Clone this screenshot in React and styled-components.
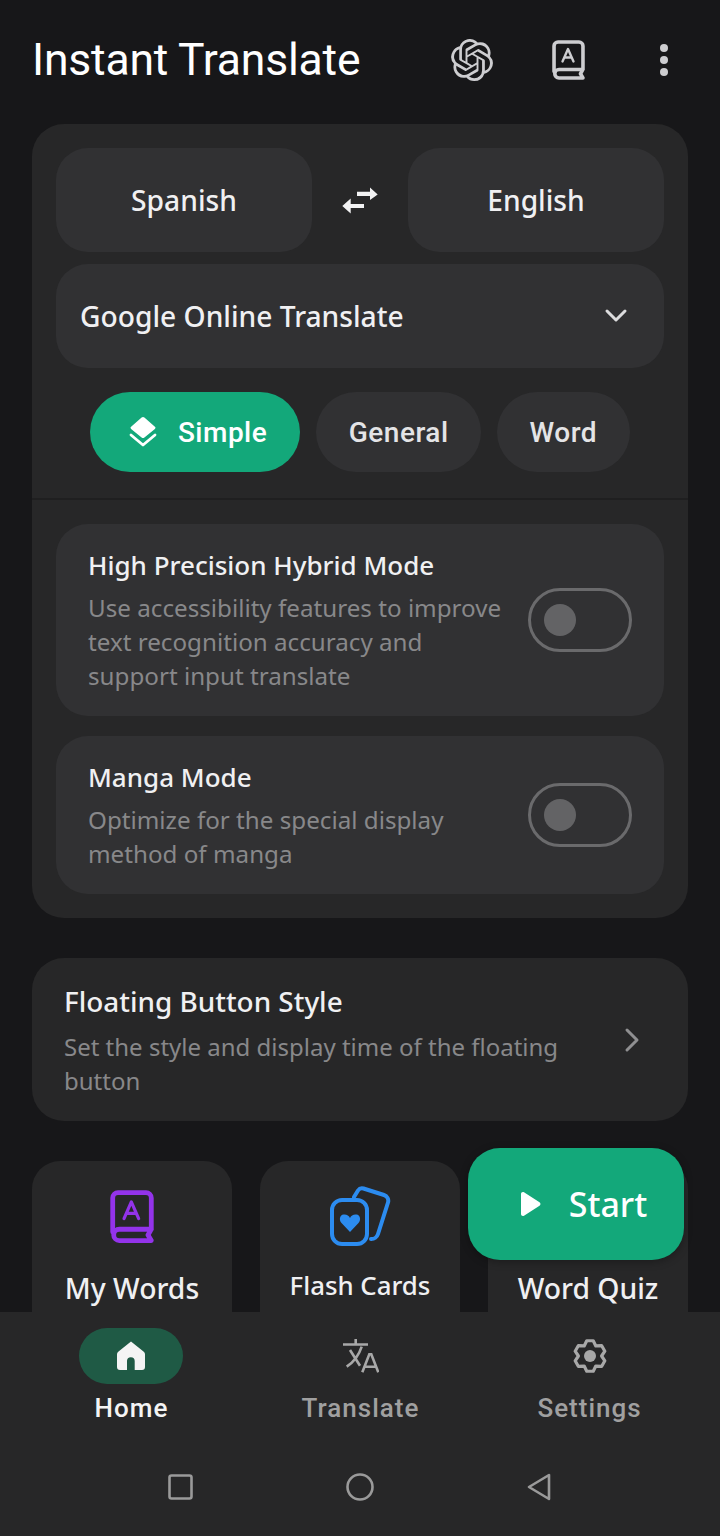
import React from 'react';
import styled, { createGlobalStyle } from 'styled-components';
import { SiOpenai } from 'react-icons/si';

const GlobalStyle = createGlobalStyle`
  html, body {
    margin: 0;
    padding: 0;
    background: #171719;
  }
  * {
    box-sizing: border-box;
  }
`;

// six lobed gear outline, top lobe first
const gearPath = () => {
  const point = (deg, r) => {
    const a = (deg * Math.PI) / 180;
    return `${(19 + r * Math.cos(a)).toFixed(2)} ${(18 + r * Math.sin(a)).toFixed(2)}`;
  };
  const parts = [];
  for (let k = 0; k < 6; k++) {
    const a = -90 + 60 * k;
    parts.push(point(a - 30, 11.6), point(a - 12, 15.6), point(a + 12, 15.6));
  }
  return `M${parts.join('L')}Z`;
};

function BookIcon({ size = 33, color = '#cdcdd0' }) {
  return (
    <svg width={size} height={size * 1.21} viewBox="0 0 33 40" fill="none" stroke={color} strokeWidth="3.600" strokeLinejoin="round" strokeLinecap="round">
      <path d="M2 31.500V6a4 4 0 0 1 4-4h21a4 4 0 0 1 4 4v23.500H7a4.250 4.250 0 0 0 0 8.500h24l-2.500-4.200 2.500-4.300" />
      <path d="M10.500 21.500l5.500-12.500 5.500 12.500M12.500 17.500h7" strokeWidth="2.400" />
    </svg>
  );
}

function CardsIcon() {
  return (
    <svg width="62" height="62" viewBox="0 0 62 62" fill="none" stroke="#2c8cf0" strokeWidth="4" strokeLinejoin="round">
      <path d="M25 11l4-6.500a5 5 0 0 1 5.500-2L55 9a6 6 0 0 1 4 7.500L49 48a7 7 0 0 1-7 5" strokeLinecap="round" />
      <rect x="3" y="14" width="35" height="44" rx="10" />
      <path d="M21 46l-8.500-9c-3-3.500-1.500-8 2-8.500 3-.4 5.500 1 6.500 3.500 1-2.500 3.500-3.900 6.500-3.500 3.500.5 5 5 2 8.500z" fill="#2c8cf0" stroke="none" />
    </svg>
  );
}

function QuizIcon() {
  return (
    <svg width="40" height="40" viewBox="0 0 40 40" fill="none" stroke="#19a97b" strokeWidth="4">
      <circle cx="20" cy="20" r="16" />
    </svg>
  );
}

function LayersIcon() {
  return (
    <svg width="30" height="32" viewBox="0 0 30 32" fill="#fff">
      <path d="M15 1a2 2 0 0 1 1.400.6l10.500 9.200a1.400 1.400 0 0 1 0 2.200l-10.500 8.400a2 2 0 0 1-2.800 0L3.100 13a1.400 1.400 0 0 1 0-2.200L13.600 1.600A2 2 0 0 1 15 1z" />
      <path d="M3 19l12 10 12-10" fill="none" stroke="#fff" strokeWidth="2.800" strokeLinecap="round" strokeLinejoin="round" />
    </svg>
  );
}

function SwapIcon() {
  return (
    <svg width="36" height="27" viewBox="0 0 36 27" fill="#f2f2f3">
      <path d="M15 4.700h13V.5l7.700 7-7.700 5.500V9H15z" />
      <path d="M22 17H8.700v-5.500L.3 19l8.400 7.500V21H22z" />
    </svg>
  );
}

function HomeIcon() {
  return (
    <svg width="28" height="30" viewBox="0 0 28 30" fill="#f4f4f4">
      <path d="M14 .5L26.500 10.500c1 .8 1.500 1.800 1.500 3V26a3 3 0 0 1-3 3h-7.300V20a3.850 3.850 0 0 0-7.700 0v9H3a3 3 0 0 1-3-3V13.500c0-1.200.5-2.200 1.500-3z" />
    </svg>
  );
}

function TranslateIcon() {
  return (
    <svg width="38" height="36" viewBox="-2 0 38 36" fill="none" stroke="#a8a8a8" strokeWidth="2.600">
      <path d="M0 6.500h25M12.700 1v5.500M7 12l10 15.700M18.700 8.700C16 17 11 24 3.700 28.700M19.300 34.300l7-18h2l7 18M22 28.700h11" />
    </svg>
  );
}

function GearIcon() {
  return (
    <svg width="36" height="36" viewBox="0 0 36 36" fill="none" stroke="#a8a8a8" strokeWidth="3.200" strokeLinejoin="round">
      <path d={gearPath()} />
      <circle cx="19" cy="18" r="6" fill="#a8a8a8" stroke="none" />
    </svg>
  );
}

function App() {
  return (
    <Screen>
      <GlobalStyle />
      <Content>
        <Header>
          <AppTitle>Instant Translate</AppTitle>
          <HeaderIcons>
            <HeaderIcon>
              <SiOpenai size={42} color="#cdcdd0" />
            </HeaderIcon>
            <HeaderIcon>
              <BookIcon />
            </HeaderIcon>
            <HeaderIcon>
              <MoreDots>
                <span />
                <span />
                <span />
              </MoreDots>
            </HeaderIcon>
          </HeaderIcons>
        </Header>

        <MainCard>
          <TopPart>
            <LangRow>
              <LangButton>Spanish</LangButton>
              <SwapIcon />
              <LangButton>English</LangButton>
            </LangRow>
            <EngineSelect>
              Google Online Translate
              <svg width="24" height="16" viewBox="0 0 24 16" fill="none" stroke="#dcdcde" strokeWidth="3" strokeLinecap="round" strokeLinejoin="round">
                <path d="M3 3l9 9 9-9" />
              </svg>
            </EngineSelect>
            <ChipRow>
              <Chip $active>
                <LayersIcon />
                Simple
              </Chip>
              <Chip>General</Chip>
              <Chip>Word</Chip>
            </ChipRow>
          </TopPart>
          <Options>
            <OptionCard>
              <OptionText>
                <OptionTitle>High Precision Hybrid Mode</OptionTitle>
                <OptionDesc>
                  Use accessibility features to improve
                  <br />
                  text recognition accuracy and
                  <br />
                  support input translate
                </OptionDesc>
              </OptionText>
              <Toggle />
            </OptionCard>
            <OptionCard>
              <OptionText>
                <OptionTitle>Manga Mode</OptionTitle>
                <OptionDesc>
                  Optimize for the special display
                  <br />
                  method of manga
                </OptionDesc>
              </OptionText>
              <Toggle />
            </OptionCard>
          </Options>
        </MainCard>

        <FloatCard>
          <FloatText>
            <FloatTitle>Floating Button Style</FloatTitle>
            <FloatDesc>
              Set the style and display time of the floating
              <br />
              button
            </FloatDesc>
          </FloatText>
          <Chevron width="16" height="26" viewBox="0 0 16 26" fill="none" stroke="#8f8f91" strokeWidth="3" strokeLinecap="round" strokeLinejoin="round">
            <path d="M3 3l10 10-10 10" />
          </Chevron>
        </FloatCard>

        <ToolRow>
          <ToolCard>
            <ToolIcon>
              <BookIcon size={44} color="#9333ea" />
            </ToolIcon>
            <ToolLabel>My Words</ToolLabel>
          </ToolCard>
          <ToolCard>
            <ToolIcon>
              <CardsIcon />
            </ToolIcon>
            <ToolLabel $small>Flash Cards</ToolLabel>
          </ToolCard>
          <ToolCard>
            <ToolIcon>
              <QuizIcon />
            </ToolIcon>
            <ToolLabel>Word Quiz</ToolLabel>
          </ToolCard>
        </ToolRow>
      </Content>

      <StartButton>
        <svg width="20" height="26" viewBox="0 0 20 26" fill="#fff">
          <path d="M0 3c0-1.600 1.500-2.500 3-1.700l15.500 10c1.300.8 1.300 2.600 0 3.400L3 24.700c-1.500.8-3-.1-3-1.700z" />
        </svg>
        Start
      </StartButton>

      <BottomBar>
        <Tabs>
          <Tab>
            <TabIcon $active>
              <HomeIcon />
            </TabIcon>
            <TabLabel $active>Home</TabLabel>
          </Tab>
          <Tab>
            <TabIcon>
              <TranslateIcon />
            </TabIcon>
            <TabLabel>Translate</TabLabel>
          </Tab>
          <Tab>
            <TabIcon>
              <GearIcon />
            </TabIcon>
            <TabLabel>Settings</TabLabel>
          </Tab>
        </Tabs>
        <SystemNav>
          <svg width="25" height="26" viewBox="0 0 25 26" fill="none" stroke="#9a9a9a" strokeWidth="2.600">
            <rect x="1.500" y="1.500" width="22" height="23" rx="2" />
          </svg>
          <svg width="28" height="28" viewBox="0 0 28 28" fill="none" stroke="#9a9a9a" strokeWidth="2.600">
            <circle cx="14" cy="14" r="12.500" />
          </svg>
          <svg width="24" height="28" viewBox="0 0 24 28" fill="none" stroke="#9a9a9a" strokeWidth="2.600" strokeLinejoin="round">
            <path d="M22 2v24L2 14z" />
          </svg>
        </SystemNav>
      </BottomBar>
    </Screen>
  );
}

export default App;

const Screen = styled.div`
  position: relative;
  display: flex;
  flex-direction: column;
  width: 720px;
  height: 1536px;
  overflow: hidden;
  background: #171719;
  font-family: Roboto, sans-serif;
`;

const Content = styled.div`
  flex: 1;
  min-height: 0;
  overflow: hidden;
  padding: 0 32px;
`;

const Header = styled.div`
  display: flex;
  align-items: center;
  justify-content: space-between;
  height: 124px;
  padding-bottom: 4px;
`;

const AppTitle = styled.h1`
  margin: 0;
  font-size: 44.500px;
  font-weight: 400;
  letter-spacing: -0.2px;
  color: #fff;
`;

const HeaderIcons = styled.div`
  display: flex;
  align-items: center;
  margin-right: -24px;
`;

const HeaderIcon = styled.div`
  display: flex;
  align-items: center;
  justify-content: center;
  width: 96px;
`;

const MoreDots = styled.div`
  display: flex;
  flex-direction: column;
  gap: 4px;

  span {
    width: 8px;
    height: 8px;
    border-radius: 50%;
    background: #cdcdd0;
  }
`;

const MainCard = styled.div`
  border-radius: 32px;
  background: #272728;
  padding-bottom: 24px;
`;

const TopPart = styled.div`
  padding: 24px 24px 26px;
  border-bottom: 2px solid #1f1f20;
`;

const LangRow = styled.div`
  display: grid;
  grid-template-columns: 256px 1fr 256px;
  justify-items: center;
  align-items: center;
`;

const LangButton = styled.div`
  display: flex;
  align-items: center;
  justify-content: center;
  width: 100%;
  height: 104px;
  border-radius: 32px;
  background: #313133;
  color: #f0f0f2;
  font-family: 'Noto Sans', sans-serif;
  font-size: 28.200px;
  font-weight: 500;
`;

const EngineSelect = styled.div`
  display: flex;
  align-items: center;
  justify-content: space-between;
  height: 104px;
  margin-top: 12px;
  padding: 0 36px 0 24px;
  border-radius: 32px;
  background: #313133;
  color: #f0f0f2;
  font-family: 'Noto Sans', sans-serif;
  font-size: 28.200px;
  font-weight: 500;
`;

const ChipRow = styled.div`
  display: flex;
  justify-content: center;
  gap: 16px;
  margin-top: 24px;
`;

const Chip = styled.div`
  display: flex;
  align-items: center;
  justify-content: center;
  gap: 20px;
  height: 80px;
  padding: 0 ${({ $active }) => ($active ? '33px 0 37.500px' : '32.500px')};
  border-radius: 40px;
  background: ${({ $active }) => ($active ? '#13a87a' : '#313133')};
  color: ${({ $active }) => ($active ? '#fff' : '#e4e4e6')};
  font-size: 28px;
  font-weight: 500;
  letter-spacing: 0.500px;
`;

const Options = styled.div`
  display: flex;
  flex-direction: column;
  gap: 20px;
  padding: 24px 24px 0;
`;

const OptionCard = styled.div`
  display: flex;
  align-items: center;
  justify-content: space-between;
  padding: 26px 32px 23px;
  border-radius: 32px;
  background: #313133;
`;

const OptionText = styled.div`
  display: flex;
  flex-direction: column;
`;

const OptionTitle = styled.div`
  color: #f0f0f2;
  font-family: 'Noto Sans', sans-serif;
  font-size: 26px;
  font-weight: 500;
  line-height: 30px;
`;

const OptionDesc = styled.div`
  margin-top: 11px;
  color: #88888a;
  font-family: 'Noto Sans', sans-serif;
  font-size: 24.200px;
  line-height: 34px;
`;

const Toggle = styled.div`
  position: relative;
  flex: none;
  width: 104px;
  height: 64px;
  margin-top: -4px;
  border: 3px solid #6a6a6c;
  border-radius: 32px;

  &::after {
    content: '';
    position: absolute;
    left: 13px;
    top: 13px;
    width: 32px;
    height: 32px;
    border-radius: 50%;
    background: #636365;
  }
`;

const FloatCard = styled.div`
  display: flex;
  align-items: center;
  justify-content: space-between;
  margin-top: 40px;
  padding: 28px 48px 23px 32px;
  border-radius: 32px;
  background: #272728;
`;

const FloatText = styled.div`
  display: flex;
  flex-direction: column;
`;

const FloatTitle = styled(OptionTitle)`
  font-size: 27.900px;
`;

const FloatDesc = styled(OptionDesc)`
  margin-top: 14px;
  font-size: 24px;
`;

const Chevron = styled.svg`
  margin-bottom: 5px;
`;

const ToolRow = styled.div`
  display: grid;
  grid-template-columns: repeat(3, 200px);
  justify-content: space-between;
  margin-top: 40px;
`;

const ToolCard = styled.div`
  display: flex;
  flex-direction: column;
  align-items: center;
  height: 200px;
  padding-top: 24px;
  border-radius: 28px;
  background: #272728;
`;

const ToolIcon = styled.div`
  display: flex;
  align-items: center;
  justify-content: center;
  height: 64px;
`;

const ToolLabel = styled.div`
  margin-top: ${({ $small }) => ($small ? '18px' : '20px')};
  color: #f0f0f2;
  font-family: 'Noto Sans', sans-serif;
  font-size: ${({ $small }) => ($small ? '25.800px' : '28.300px')};
  font-weight: 500;
`;

const StartButton = styled.div`
  position: absolute;
  left: 468px;
  top: 1148px;
  display: flex;
  align-items: center;
  justify-content: center;
  gap: 28px;
  width: 216px;
  height: 112px;
  padding-left: 16px;
  border-radius: 32px;
  background: #13a87a;
  box-shadow: 0 2px 8px rgba(0, 0, 0, 0.3);
  color: #fff;
  font-family: 'Noto Sans', sans-serif;
  font-size: 34px;
  font-weight: 500;
`;

const BottomBar = styled.div`
  flex: none;
  height: 224px;
  background: #272728;
`;

const Tabs = styled.div`
  display: grid;
  grid-template-columns: 262px 196px 262px;
  padding-top: 16px;
`;

const Tab = styled.div`
  display: flex;
  flex-direction: column;
  align-items: center;
`;

const TabIcon = styled.div`
  display: flex;
  align-items: center;
  justify-content: center;
  width: 104px;
  height: 56px;
  border-radius: 28px;
  background: ${({ $active }) => ($active ? '#1f5a45' : 'transparent')};
`;

const TabLabel = styled.div`
  margin-top: 9px;
  padding-left: 1px;
  color: ${({ $active }) => ($active ? '#f4f4f4' : '#a0a0a0')};
  font-size: 26px;
  font-weight: 500;
  letter-spacing: 1px;
`;

const SystemNav = styled.div`
  display: flex;
  align-items: center;
  justify-content: center;
  gap: 153px;
  margin-top: 50px;
  padding-right: 2px;
`;
